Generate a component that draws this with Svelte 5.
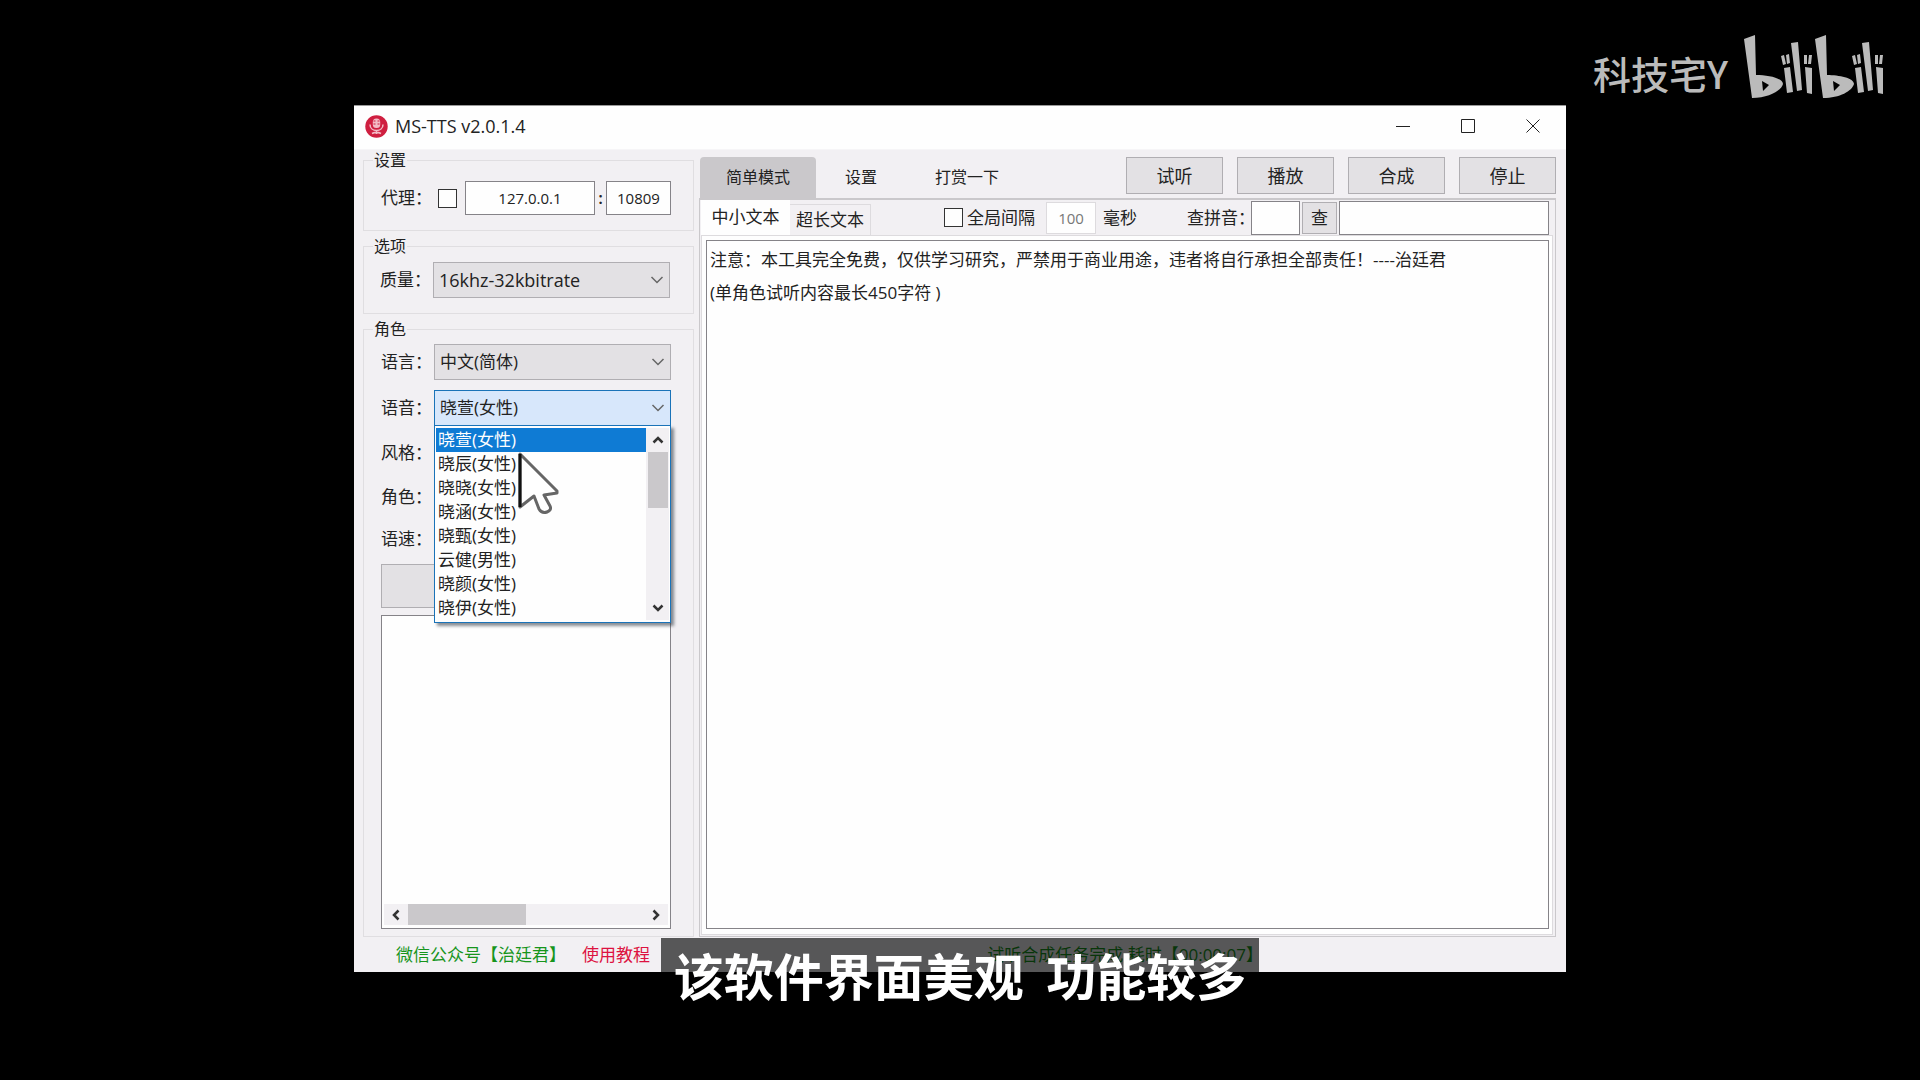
<script>
  const voices = ['晓萱(女性)', '晓辰(女性)', '晓晓(女性)', '晓涵(女性)', '晓甄(女性)', '云健(男性)', '晓颜(女性)', '晓伊(女性)'];
  const actions = ['试听', '播放', '合成', '停止'];
  const notice = '注意：本工具完全免费，仅供学习研究，严禁用于商业用途，违者将自行承担全部责任！----治廷君\n(单角色试听内容最长450字符 )';
  let voice = $state(voices[0]);
</script>

{#snippet chevron()}
  <svg class="chevron" width="14" height="10" viewBox="0 0 14 10" aria-hidden="true"><path d="M1.5 2 7 7.5 12.500 2" /></svg>
{/snippet}

{#snippet arrow(d)}
  <svg class="arrow" width="14" height="14" viewBox="0 0 14 14" aria-hidden="true"><path {d} /></svg>
{/snippet}

<main class="stage">
  <section class="window">
    <header class="titlebar">
      <svg class="logo" width="23" height="23" viewBox="0 0 23 23" aria-hidden="true">
        <circle cx="11.500" cy="11.500" r="11.200" fill="#cf1f40" />
        <rect x="7.800" y="3.500" width="7.400" height="9.500" rx="3.500" fill="#f3bcc6" />
        <path d="M8.500 6h2M12.500 6h2M8.500 9h2M12.500 9h2" stroke="#cf1f40" stroke-width="1.200" />
        <path d="M5 9.500c0 8 13 8 13 0M11.500 15.500v3.500M7 18.500c3-1.500 6-1.500 9 0" fill="none" stroke="#f3bcc6" stroke-width="1.500" />
      </svg>
      <h1>MS-TTS v2.0.1.4</h1>
      <div class="controls">
        <button aria-label="最小化"><svg width="16" height="16" viewBox="0 0 16 16"><path d="M1 8.500h14" /></svg></button>
        <button aria-label="最大化"><svg width="16" height="16" viewBox="0 0 16 16"><path d="M1.500 1.500h13v13h-13z" /></svg></button>
        <button aria-label="关闭"><svg width="16" height="16" viewBox="0 0 16 16"><path d="M1.500 1.500l13 13M14.500 1.500l-13 13" /></svg></button>
      </div>
    </header>

    <div class="body">
      <aside class="side">
        <fieldset>
          <legend>设置</legend>
          <div class="proxy">
            <label for="proxy">代理：</label>
            <input id="proxy" type="checkbox" />
            <input class="host" type="text" value="127.0.0.1" aria-label="代理地址" />
            <span class="colon">:</span>
            <input class="port" type="text" value="10809" aria-label="端口" />
          </div>
        </fieldset>

        <fieldset>
          <legend>选项</legend>
          <div class="row quality">
            <label for="quality">质量：</label>
            <div class="combo">
              <select id="quality"><option>16khz-32kbitrate</option></select>
              {@render chevron()}
            </div>
          </div>
        </fieldset>

        <fieldset class="role">
          <legend>角色</legend>
          <div class="row tall">
            <label for="lang">语言：</label>
            <div class="combo">
              <select id="lang"><option>中文(简体)</option></select>
              {@render chevron()}
            </div>
          </div>
          <div class="row tall">
            <label for="voice">语音：</label>
            <div class="combo open">
              <select id="voice" bind:value={voice}>
                {#each voices as v}<option>{v}</option>{/each}
              </select>
              {@render chevron()}
              <div class="menu">
                <ul role="listbox" aria-label="语音">
                  {#each voices as v}
                    <li role="option" aria-selected={v === voice} class:active={v === voice}>{v}</li>
                  {/each}
                </ul>
                <div class="vscroll">
                  {@render arrow('M2.500 9.500 7 5l4.500 4.500')}
                  <div class="vthumb"></div>
                  {@render arrow('M2.500 4.500 7 9l4.500-4.500')}
                </div>
                <svg class="pointer" width="42" height="66" viewBox="-2 -2 42 66" aria-hidden="true">
                  <path d="M0 0V53L14 42L19 55Q22 60 27 58Q32 56 30 52L24 41L37 39V37Z" fill="#fff" stroke="#666" stroke-width="3" stroke-linejoin="round" />
                  <path d="M0 0V53" stroke="#111" stroke-width="3" />
                </svg>
              </div>
            </div>
          </div>
          <div class="row">
            <label for="style">风格：</label>
            <div class="combo"><select id="style"></select></div>
          </div>
          <div class="row">
            <label for="part">角色：</label>
            <div class="combo"><select id="part"></select></div>
          </div>
          <div class="row short">
            <label for="speed">语速：</label>
            <input id="speed" type="range" />
          </div>
          <button class="wide" aria-label="添加"></button>
          <div class="listbox">
            <div class="hscroll">
              {@render arrow('M9.500 2.500 5 7l4.500 4.500')}
              <div class="track"><div class="hthumb"></div></div>
              {@render arrow('M4.500 2.500 9 7l-4.500 4.500')}
            </div>
          </div>
        </fieldset>
      </aside>

      <div class="main">
        <div class="toolbar">
          <nav class="tabs">
            <button class="current">简单模式</button>
            <button>设置</button>
            <button>打赏一下</button>
          </nav>
          <div class="actions">
            {#each actions as a}<button>{a}</button>{/each}
          </div>
        </div>
        <div class="pane">
          <div class="strip">
            <button class="sub selected">中小文本</button>
            <button class="sub">超长文本</button>
            <div class="gap-box">
              <input id="gap" type="checkbox" />
              <label for="gap">全局间隔</label>
            </div>
            <input class="ms" id="ms" type="text" value="100" disabled />
            <label class="unit" for="ms">毫秒</label>
            <label class="pinyin-label" for="pinyin">查拼音：</label>
            <input class="pinyin" id="pinyin" type="text" />
            <button class="lookup">查</button>
            <input class="result" type="text" aria-label="拼音结果" />
          </div>
          <div class="page">
            <textarea aria-label="文本" spellcheck="false" value={notice}></textarea>
          </div>
        </div>
      </div>
    </div>

    <footer>
      <a class="account" href="#account">微信公众号【治廷君】</a>
      <a class="guide" href="#guide">使用教程</a>
      <span class="status">试听合成任务完成,耗时【00:00:07】</span>
    </footer>
  </section>

  <div class="watermark">
    <span>科技宅Y</span>
    <svg width="142" height="66" viewBox="0 0 142 66" role="img" aria-label="bilibili">
      <defs>
        <g id="bili">
          <path fill-rule="evenodd" d="M0 4 11 0 12 40C24 40 39 43 39 49C37 56 25 63 8 63ZM18 46 19 56 25 50Z" />
          <path d="M37 21 40 20 42 29 39 30ZM42 20 45 19 46 28 43 29ZM40 33 46 32 49 57 43 58ZM47 8 54 7 58 55 53 56ZM60 20 63 20 63 29 60 29ZM65 20 68 20 67 29 64 29ZM61 32 68 33 68 59 63 58Z" />
        </g>
      </defs>
      <use href="#bili" />
      <use href="#bili" x="71" />
    </svg>
  </div>

  <div class="caption"><p>该软件界面美观  功能较多</p></div>
</main>

<style>
  :global(body) { background: #000; }
  .stage {
    position: relative;
    box-sizing: border-box;
    display: flex;
    min-height: 100vh;
    padding: 105px 354px 108px;
    background: #000;
    color: #222;
    font: 17px/24px 'Open Sans', 'Noto Sans CJK SC', sans-serif;
  }
  .stage *, .stage *::before { box-sizing: border-box; }
  button, input, select, textarea {
    font: inherit;
    color: inherit;
    margin: 0;
    padding: 0;
    border-radius: 0;
    outline: none;
  }
  button { background: none; border: 0; }
  input[type='text'] {
    min-width: 0;
    border: 1px solid #858388;
    background: #fefefe;
    font-size: 15px;
    text-align: center;
  }
  input[type='checkbox'] {
    appearance: none;
    flex: none;
    width: 19px;
    height: 19px;
    border: 1px solid #333;
    background: #fefefe;
  }

  .window {
    display: flex;
    flex: 1;
    flex-direction: column;
    background: #f2f0f3;
    min-width: 0;
  }
  .titlebar {
    display: flex;
    align-items: center;
    height: 45px;
    padding: 0 1px 3px 11px;
    background: #fefefe;
    border-top: 1px solid #999;
    border-bottom: 1px solid #f6f5f7;
  }
  h1 { margin: 0 0 0 7px; font-size: 18px; font-weight: 400; }
  .controls { display: flex; margin-left: auto; }
  .controls button { display: grid; place-items: center; width: 65px; height: 40px; }
  .controls path { fill: none; stroke: #222; stroke-width: 1; }

  .body { display: flex; flex: 1; gap: 5px; padding: 0 10px 0 9px; }
  .side { display: flex; flex-direction: column; gap: 5px; width: 331px; }
  fieldset {
    min-width: 0;
    margin: 0;
    padding: 0 22px 0 9px;
    border: 1px solid #e0dee1;
  }
  legend { height: 20px; padding: 0 1px; font-size: 16px; line-height: 20px; }
  .proxy { display: flex; align-items: center; height: 60px; padding: 0 0 4px 8px; }
  .proxy label { width: 57px; }
  .proxy input[type='text'] { height: 34px; }
  .host { flex: 1; margin-left: 8px; }
  .colon { width: 11px; text-align: center; font-weight: 600; }
  .port { width: 65px; }

  .row { display: grid; grid-template-columns: 53px 1fr; align-items: center; height: 44px; padding-left: 8px; }
  .row.tall { height: 46px; }
  .row.short { height: 40px; }
  .row.quality { height: 57px; padding: 0 1px 9px 7px; font-size: 18px; }
  .quality label { font-size: 17px; }
  .combo { position: relative; display: grid; align-items: center; }
  .combo > * { grid-area: 1 / 1; }
  select {
    appearance: none;
    width: 100%;
    height: 36px;
    padding: 0 5px;
    background: #e3e1e4;
    border: 1px solid #b0aeb2;
  }
  .chevron { justify-self: end; margin-right: 6px; pointer-events: none; }
  .chevron path { fill: none; stroke: #666; stroke-width: 1.500; }
  .open select { background: #d7e7fb; border-color: #1a73b8; }

  .menu {
    position: absolute;
    top: 35px;
    left: 0;
    right: 0;
    z-index: 2;
    display: grid;
    grid-template-columns: 1fr 23px;
    padding: 2px 1px;
    border: 1px solid #1a73b8;
    background: #fefefe;
    box-shadow: 3px 3px 3px rgba(40, 50, 60, 0.55);
  }
  .menu ul { margin: 0; padding: 0; list-style: none; }
  .menu li { height: 24px; padding-left: 2px; line-height: 24px; }
  .menu li.active { background: #0f7bd4; color: #fff; }
  .vscroll { display: flex; flex-direction: column; align-items: center; background: #f2f0f3; padding: 5px 0; }
  .arrow path { fill: none; stroke: #333; stroke-width: 2.500; }
  .vscroll .arrow { flex: none; }
  .vthumb { width: 20px; height: 56px; margin: 5px 0 auto; background: #cac8cb; }
  .pointer { position: absolute; left: 83px; top: 26px; }

  .role { display: flex; flex: 1; flex-direction: column; }
  .wide { height: 44px; margin: 5px 0 7px 8px; background: #e3e1e4; border: 1px solid #b0aeb2; }
  .listbox {
    display: flex;
    flex: 1;
    align-items: flex-end;
    margin: 0 0 7px 8px;
    padding: 0 2px 3px;
    border: 1px solid #858388;
    background: #fefefe;
  }
  .hscroll { display: flex; flex: 1; align-items: center; gap: 5px; padding: 0 5px; background: #f2f0f3; }
  .track { flex: 1; }
  .hthumb { width: 50%; height: 21px; background: #cac8cb; }

  .main { display: flex; flex: 1; flex-direction: column; min-width: 0; padding-top: 7px; }
  .toolbar { display: flex; justify-content: space-between; height: 41px; }
  .tabs { display: flex; padding-left: 1px; font-size: 16px; }
  .tabs button { padding: 0 29px 2px; }
  .tabs .current { padding: 0 26px 2px; background: #cac8cb; border-radius: 4px 4px 0 0; }
  .actions { display: flex; gap: 14px; }
  .actions button {
    width: 97px;
    height: 37px;
    border: 1px solid #b0aeb2;
    background: #e3e1e4;
    font-size: 18px;
  }
  .pane {
    display: flex;
    flex: 1;
    flex-direction: column;
    padding: 0 2px 1px 1px;
    border: 1px solid #cac8cb;
    border-top-width: 2px;
  }
  .strip { display: flex; align-items: center; height: 35px; }
  .sub { align-self: flex-end; width: 81px; height: 31px; border: 1px solid #dddbde; border-left: 0; border-bottom: 0; }
  .sub.selected { align-self: stretch; width: 89px; height: auto; padding-bottom: 2px; border: 0; background: #fefefe; }
  .gap-box { display: flex; align-items: center; gap: 4px; width: 175px; padding-left: 73px; white-space: nowrap; }
  .strip label { padding-top: 1px; }
  .strip .ms { width: 50px; height: 32px; border-color: #dddbde; color: #777; }
  .strip .unit { width: 91px; padding-left: 7px; }
  .pinyin-label { width: 64px; white-space: nowrap; }
  .pinyin { width: 49px; height: 34px; }
  .lookup { width: 35px; height: 32px; margin: 0 2px; border: 1px solid #b0aeb2; background: #e3e1e4; }
  .result { flex: 1; height: 34px; margin-right: 4px; }
  .page { display: flex; flex: 1; padding: 4px 3px 5px 4px; border: 1px solid #dddbde; background: #fefefe; }
  textarea {
    flex: 1;
    padding: 2px 3px;
    border: 1px solid #858388;
    background: #fefefe;
    line-height: 33px;
    resize: none;
  }

  footer { display: flex; align-items: center; height: 35px; padding: 0 303px 0 42px; white-space: nowrap; }
  footer a { text-decoration: none; }
  .account, .status { color: #17951c; }
  .guide { margin-left: 16px; color: #dd1240; }
  .status { margin-left: auto; }

  .watermark { position: absolute; top: 35px; right: 34px; display: flex; align-items: flex-start; gap: 16px; color: #bbb; }
  .watermark span { font: 500 38px/76px 'Noto Sans CJK SC', sans-serif; }
  .watermark svg { fill: #bbb; }

  .caption { position: absolute; left: 0; right: 0; top: 938px; z-index: 3; display: flex; justify-content: center; }
  .caption p {
    margin: 0;
    padding: 0 13px;
    background: rgba(0, 0, 0, 0.64);
    color: #fff;
    font: 700 50px/72px 'Noto Sans CJK SC', sans-serif;
    white-space: pre;
  }
</style>
